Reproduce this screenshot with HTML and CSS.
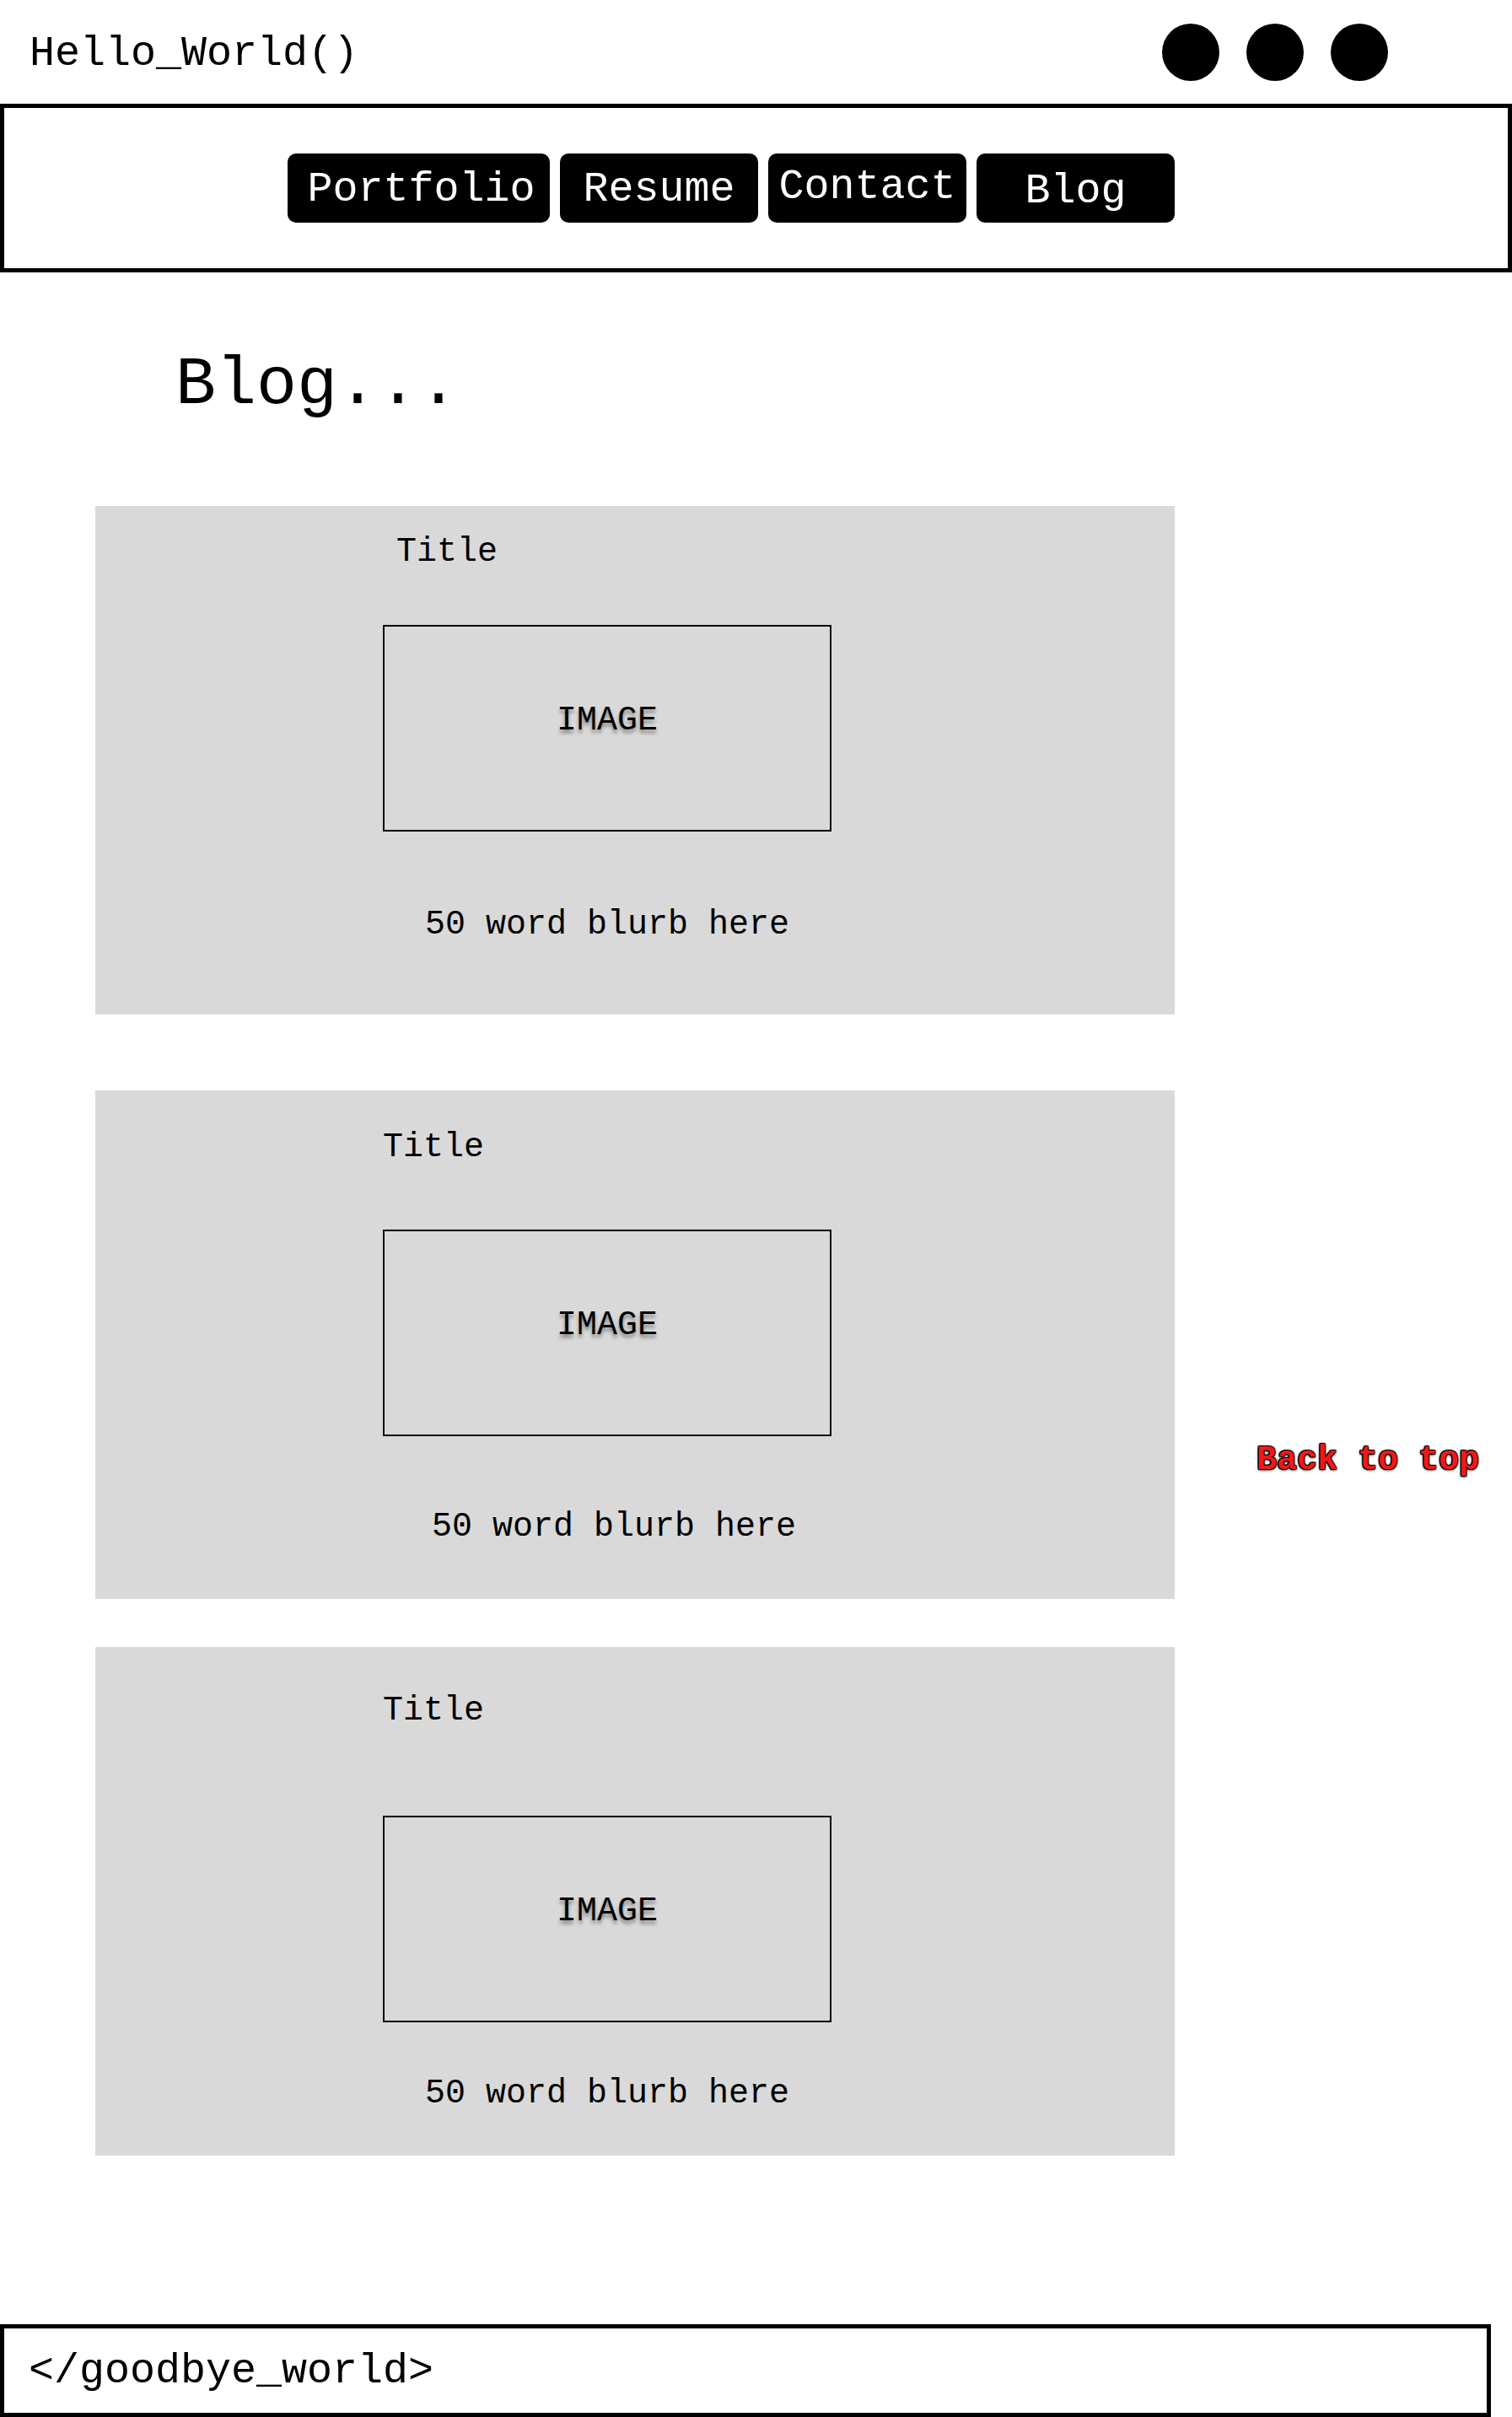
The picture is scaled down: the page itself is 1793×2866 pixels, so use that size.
FILE: index.html
```html
<!DOCTYPE html>
<html lang="en">
<head>
<meta charset="utf-8">
<title>Blog</title>
<link rel="stylesheet" href="styles.css">
</head>
<body>
<header class="top">
  <div class="brand">Hello_World()</div>
  <div class="dots">
    <span class="dot"></span>
    <span class="dot"></span>
    <span class="dot"></span>
  </div>
</header>
<nav class="nav">
  <a class="btn btn-wide" href="#">Portfolio</a>
  <a class="btn" href="#">Resume</a>
  <a class="btn btn-up" href="#">Contact</a>
  <a class="btn btn-down" href="#">Blog</a>
</nav>
<h1 class="page-title">Blog...</h1>
<main class="posts">
  <article class="card card-1">
    <div class="card-title">Title</div>
    <div class="image-box"><span class="image-label">IMAGE</span></div>
    <p class="blurb">50 word blurb here</p>
  </article>
  <article class="card card-2">
    <div class="card-title">Title</div>
    <div class="image-box"><span class="image-label">IMAGE</span></div>
    <p class="blurb">50 word blurb here</p>
  </article>
  <a class="back-top" href="#">Back to top</a>
  <article class="card card-3">
    <div class="card-title">Title</div>
    <div class="image-box"><span class="image-label">IMAGE</span></div>
    <p class="blurb">50 word blurb here</p>
  </article>
</main>
<footer class="foot">&lt;/goodbye_world&gt;</footer>
</body>
</html>
```
FILE: styles.css
```css
* {
  box-sizing: border-box;
}

html, body {
  margin: 0;
  padding: 0;
  background: #ffffff;
}

body {
  font-family: "Liberation Mono", "Courier New", monospace;
  color: #000;
  width: 1793px;
}

/* header */
.top {
  height: 123px;
  display: flex;
  align-items: center;
  justify-content: space-between;
  padding: 0 147px 0 35px;
}

.brand {
  font-size: 50px;
  line-height: 50px;
  padding-top: 4px;
}

.dots {
  display: flex;
  gap: 32px;
}

.dot {
  width: 68px;
  height: 68px;
  border-radius: 50%;
  background: #000;
}

/* nav */
.nav {
  height: 200px;
  border: 5px solid #000;
  display: flex;
  align-items: center;
  gap: 12px;
  padding-left: 336px;
}

.btn {
  width: 235px;
  height: 82px;
  background: #000;
  color: #fff;
  border-radius: 10px;
  text-decoration: none;
  font-size: 50px;
  line-height: 50px;
  display: flex;
  align-items: center;
  justify-content: center;
  padding-top: 4px;
}

.btn-wide {
  width: 311px;
  padding-left: 6px;
}

.btn-up {
  padding-top: 0;
  padding-bottom: 2px;
}

.btn-down {
  padding-top: 8px;
}

/* heading */
.page-title {
  margin: 94px 0 0 208px;
  font-size: 80px;
  line-height: 80px;
  font-weight: normal;
}

/* posts */
.posts {
  margin-top: 103px;
  display: grid;
  grid-template-columns: 1280px 1fr;
  padding-left: 113px;
}

.card {
  grid-column: 1;
  height: 603px;
  background: #d9d9d9;
  display: flex;
  flex-direction: column;
  align-items: flex-start;
  padding-left: 341px;
}

.card-title {
  font-size: 40px;
  line-height: 40px;
}

.image-box {
  width: 532px;
  height: 245px;
  border: 2px solid #000;
  text-align: center;
  padding-top: 92px;
}

.image-label {
  font-size: 40px;
  line-height: 40px;
  text-shadow: 0 4px 4px rgba(0, 0, 0, 0.4);
}

.blurb {
  width: 532px;
  margin: 0;
  text-align: center;
  font-size: 40px;
  line-height: 40px;
}

.card-1 .card-title { margin-top: 35px; padding-left: 16px; }
.card-1 .image-box { margin-top: 66px; }
.card-1 .blurb { margin-top: 91px; }

.card-2 { margin-top: 90px; grid-row: 2; }
.card-2 .card-title { margin-top: 48px; }
.card-2 .image-box { margin-top: 77px; }
.card-2 .blurb { margin-top: 88px; padding-left: 16px; }

.card-3 { margin-top: 57px; grid-row: 3; }
.card-3 .card-title { margin-top: 56px; }
.card-3 .image-box { margin-top: 104px; }
.card-3 .blurb { margin-top: 65px; }

.back-top {
  grid-column: 2;
  grid-row: 2;
  align-self: start;
  margin-top: 509px;
  padding-left: 97px;
  font-size: 40px;
  line-height: 40px;
  font-weight: bold;
  color: #f21818;
  text-decoration: none;
  white-space: nowrap;
  text-shadow: 1px 1px 1px #000, -1px -1px 1px #000, 1px -1px 1px #000, -1px 1px 1px #000, 0 2px 3px rgba(0, 0, 0, 0.5);
}

/* footer */
.foot {
  margin-top: 200px;
  width: 1768px;
  height: 110px;
  border: 5px solid #000;
  display: flex;
  align-items: center;
  padding: 2px 0 0 29px;
  font-size: 50px;
  line-height: 50px;
}
```
